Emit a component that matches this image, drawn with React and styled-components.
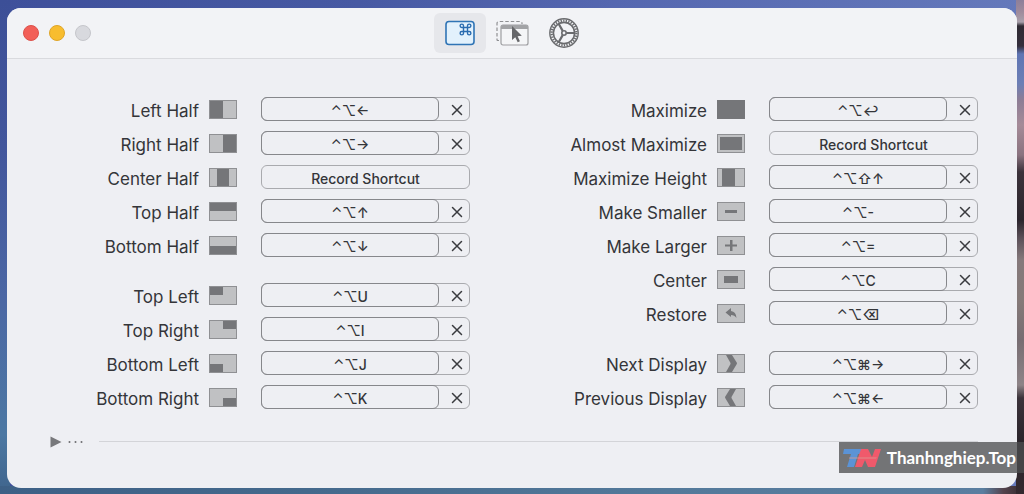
import React from "react";
import styled, { createGlobalStyle } from "styled-components";

const Global = createGlobalStyle`
  * { box-sizing: border-box; }
  body {
    margin: 0;
    font-family: Inter, "Liberation Sans", sans-serif;
    color: #343539;
    background: #4a5ea6;
  }
  button { font: inherit; color: inherit; margin: 0; padding: 0; border: 0; background: none; }
`;

const Desktop = styled.div`
  position: relative;
  min-height: 100vh;
  padding: 8px 7px 6px;
  background:
    linear-gradient(180deg, #8d7f9a 0, #a08b9c 12px, #a9a0ab 22px, #2f2a33 26px, #352f3c 46px, #5f75b4 54px, #6c7fb5 84px, #8d7d95 100px, #a58b98 125px, #8a737f 155px, #3b323a 172px, #2b252c 220px, #5b5058 238px, #85797b 260px, #857a78 300px, #776d72 340px, #8e8487 385px, #3b333a 398px, #2b252b 440px, #33292f 494px) right top / 8px 100% no-repeat,
    linear-gradient(90deg, #3d6086 0, #44698c 30%, #53799a 65%, #5a7ea0 96%, #54434d 98%, #33292f 100%) left bottom / 100% 8px no-repeat,
    linear-gradient(180deg, #3c4f97 0, #42569c 30%, #4b67a4 60%, #4c78a3 88%, #3f648c 100%) left top / 10px 100% no-repeat,
    linear-gradient(90deg, #3f509b 0, #4759a3 35%, #5567b0 60%, #6579bb 100%);
`;

const Window = styled.main`
  min-height: calc(100vh - 14px);
  border-radius: 14px;
  background: #eeeff3;
  overflow: hidden;
`;

const TitleBar = styled.header`
  display: grid;
  grid-template-columns: 1fr auto 1fr;
  align-items: center;
  height: 51px;
  padding: 0 16px;
  background: #f2f3f6;
  border-bottom: 1px solid #d9dade;
`;

const Lights = styled.div`
  display: flex;
  gap: 10px;
`;

const Light = styled.button`
  width: 16px;
  height: 16px;
  border-radius: 50%;
  background: ${(p) => p.$fill};
  border: 1px solid ${(p) => p.$edge};
`;

const Tabs = styled.nav`
  display: flex;
`;

const Tab = styled.button`
  display: grid;
  place-items: center;
  width: 52px;
  height: 40px;
  border-radius: 6px;
  background: ${(p) => (p.$active ? "#e6e7eb" : "none")};
`;

const Content = styled.section`
  display: grid;
  grid-template-columns: 1fr 1fr;
  gap: 88px;
  padding: 38px 39px 0 43px;
`;

const Column = styled.div`
  display: flex;
  flex-direction: column;
  gap: 26px;
`;

const Group = styled.div`
  display: flex;
  flex-direction: column;
  gap: 10px;
`;

const Row = styled.div`
  display: grid;
  grid-template-columns: 1fr 28px 233px;
  align-items: center;
  height: 24px;
`;

const Name = styled.span`
  padding: 4px 10px 0 0;
  font-size: 17px;
  line-height: 20px;
  text-align: right;
  white-space: nowrap;
`;

const Recorder = styled.div`
  display: flex;
  height: 24px;
  margin-left: 24px;
  border: 1px solid #a9aaae;
  border-radius: 6px;
`;

const Shortcut = styled.button`
  flex: 1;
  margin: -1px 0 -1px -1px;
  padding-top: 4px;
  border: 1px solid #86878b;
  border-radius: 6px;
  font-size: 14px;
  font-weight: 500;
  line-height: 18px;
`;

const Record = styled.button`
  flex: 1;
  padding-top: 4px;
  font-size: 14px;
  font-weight: 500;
  line-height: 18px;
`;

const Clear = styled.button`
  display: grid;
  place-items: center;
  width: 30px;
  padding: 2px 0 0 6px;
`;

const More = styled.footer`
  display: grid;
  grid-template-columns: auto 1fr;
  align-items: center;
  gap: 16px;
  padding: 22px 39px 0 43px;
`;

const Disclosure = styled.button`
  display: flex;
  align-items: center;
  gap: 6px;
  height: 20px;
  padding-top: 2px;
`;

const Rule = styled.hr`
  width: 100%;
  margin: 0;
  border: 0;
  border-top: 1px solid #d3d4d8;
`;

const Watermark = styled.aside`
  position: absolute;
  right: 0;
  bottom: 21px;
  display: flex;
  align-items: center;
  gap: 6px;
  height: 31px;
  padding: 0 8px 0 4px;
  background: rgba(76, 77, 79, 0.76);
  color: #fff;
  font: 700 17px/30px Lato, sans-serif;
`;

const DARK = "#757679";
const SHAPES = {
  left: <rect width="14" height="19" />,
  right: <rect x="14" width="14" height="19" />,
  centerHalf: <rect x="8" width="12" height="19" />,
  top: <rect width="28" height="9" />,
  bottom: <rect y="10" width="28" height="9" />,
  topLeft: <rect width="14" height="9" />,
  topRight: <rect x="14" width="14" height="9" />,
  bottomLeft: <rect y="10" width="14" height="9" />,
  bottomRight: <rect x="14" y="10" width="14" height="9" />,
  full: <rect width="28" height="19" />,
  almost: <rect x="3" y="3" width="22" height="13" />,
  height: <rect x="5" width="13" height="19" />,
  minus: <rect x="8" y="8" width="12" height="3" />,
  plus: <path d="M13 4h2.500v4.500H20v2h-4.500V15H13v-4.500H8v-2h5z" />,
  center: <rect x="7" y="6" width="14" height="7" />,
  restore: <path d="M8.500 8.500 14 4v3q5 .5 5.500 7-2-3-5.500-3v2z" />,
  next: <path d="M9 1h6l5 8-.2 1L15 18H9l4.500-8v-1z" />,
  previous: <path d="M19 1h-6L8 9l.2 1L13 18h6l-4.500-8v-1z" />,
};

function Thumb({ kind }) {
  return (
    <svg width="28" height="19" viewBox="0 0 28 19" aria-hidden="true">
      <rect width="28" height="19" fill="#c0c1c3" />
      <g fill={DARK}>{SHAPES[kind]}</g>
      <rect x=".5" y=".5" width="27" height="18" fill="none" stroke={kind === "full" ? DARK : "#8f9093"} />
    </svg>
  );
}

const LEFT = [
  [
    ["Left Half", "left", "⌃⌥←"],
    ["Right Half", "right", "⌃⌥→"],
    ["Center Half", "centerHalf", null],
    ["Top Half", "top", "⌃⌥↑"],
    ["Bottom Half", "bottom", "⌃⌥↓"],
  ],
  [
    ["Top Left", "topLeft", "⌃⌥U"],
    ["Top Right", "topRight", "⌃⌥I"],
    ["Bottom Left", "bottomLeft", "⌃⌥J"],
    ["Bottom Right", "bottomRight", "⌃⌥K"],
  ],
];

const RIGHT = [
  [
    ["Maximize", "full", "⌃⌥↩"],
    ["Almost Maximize", "almost", null],
    ["Maximize Height", "height", "⌃⌥⇧↑"],
    ["Make Smaller", "minus", "⌃⌥-"],
    ["Make Larger", "plus", "⌃⌥="],
    ["Center", "center", "⌃⌥C"],
    ["Restore", "restore", "⌃⌥⌫"],
  ],
  [
    ["Next Display", "next", "⌃⌥⌘→"],
    ["Previous Display", "previous", "⌃⌥⌘←"],
  ],
];

function ShortcutRow({ name, kind, keys }) {
  const id = `action-${kind}`;
  return (
    <Row>
      <Name id={id}>{name}</Name>
      <Thumb kind={kind} />
      <Recorder role="group" aria-labelledby={id}>
        {keys ? (
          <>
            <Shortcut>{keys}</Shortcut>
            <Clear aria-label={`Clear ${name}`}>
              <svg width="12" height="12" viewBox="0 0 12 12" fill="none" stroke="#3a3b3f" strokeWidth="1.500" strokeLinecap="round">
                <path d="m1.500 1.500 9 9m0-9-9 9" />
              </svg>
            </Clear>
          </>
        ) : (
          <Record>Record Shortcut</Record>
        )}
      </Recorder>
    </Row>
  );
}

function ShortcutColumn({ groups }) {
  return (
    <Column>
      {groups.map((rows, i) => (
        <Group key={i}>
          {rows.map(([name, kind, keys]) => (
            <ShortcutRow key={kind} name={name} kind={kind} keys={keys} />
          ))}
        </Group>
      ))}
    </Column>
  );
}

function ShortcutsIcon() {
  return (
    <svg width="30" height="26" viewBox="0 0 30 26" fill="none">
      <rect x="1" y="1.500" width="28" height="23" rx="3" fill="#e2f1fc" stroke="#2f74b5" strokeWidth="1.600" />
      <path
        d="M18.500 7.500h4v4h-4zM18.500 7.500h-1.700a1.700 1.700 0 1 1 1.700-1.700zM22.500 7.500V5.800a1.700 1.700 0 1 1 1.700 1.700zM22.500 11.500h1.700a1.700 1.700 0 1 1-1.700 1.700zM18.500 11.500v1.700a1.700 1.700 0 1 1-1.700-1.700z"
        stroke="#2a6cb0"
        strokeWidth="1.400"
      />
    </svg>
  );
}

function SnapIcon() {
  return (
    <svg width="34" height="28" viewBox="0 0 34 28" fill="none">
      <path d="M4 21.500H3q-1 0-1-1v-16q0-2 2-2h21q2 0 2 2V5" stroke="#8f9093" strokeWidth="1.200" strokeDasharray="3.500 2" />
      <rect x="6" y="6" width="27" height="20" rx="2" fill="#f4f5f7" stroke="#9d9ea1" strokeWidth="1.200" />
      <path d="M6 10V8q0-2 2-2h23q2 0 2 2v2z" fill="#a2a3a6" />
      <path d="M17 7v14l3.300-2.700 2.400 5 2.200-1-2.300-5 4.200-.5z" fill="#66676a" />
    </svg>
  );
}

function GearIcon() {
  return (
    <svg width="32" height="32" viewBox="0 0 32 32" fill="none" stroke="#6a6b6e">
      <circle cx="16" cy="16" r="14.200" strokeWidth="1.400" />
      <circle cx="16" cy="16" r="12.400" strokeWidth="2.400" strokeDasharray="1.300 1.300" />
      <circle cx="16" cy="16" r="10.600" strokeWidth="1.600" />
      <circle cx="16" cy="16" r="2.200" strokeWidth="1.600" />
      <path d="M18.500 16H27M14.700 13.900 10.500 6.500M14.700 18.100l-4.200 7.400" strokeWidth="2.200" />
    </svg>
  );
}

export default function App() {
  return (
    <Desktop>
      <Global />
      <Window>
        <TitleBar>
          <Lights>
            <Light $fill="#f25f58" $edge="#dc514b" aria-label="Close" />
            <Light $fill="#f8bd2f" $edge="#dfa528" aria-label="Minimize" />
            <Light $fill="#d8d9de" $edge="#c5c6cb" aria-label="Zoom" />
          </Lights>
          <Tabs>
            <Tab $active aria-label="Shortcuts"><ShortcutsIcon /></Tab>
            <Tab aria-label="Snap areas"><SnapIcon /></Tab>
            <Tab aria-label="Settings"><GearIcon /></Tab>
          </Tabs>
        </TitleBar>
        <Content>
          <ShortcutColumn groups={LEFT} />
          <ShortcutColumn groups={RIGHT} />
        </Content>
        <More>
          <Disclosure aria-label="Show more">
            <svg width="12" height="12" viewBox="0 0 12 12"><path d="M.5.5 11.500 6 .5 11.500z" fill="#77787b" /></svg>
            <svg width="15" height="4" viewBox="0 0 15 4" fill="#6d6e71">
              <circle cx="1.500" cy="2" r="1" /><circle cx="7.500" cy="2" r="1" /><circle cx="13.500" cy="2" r="1" />
            </svg>
          </Disclosure>
          <Rule />
        </More>
      </Window>
      <Watermark>
        <svg width="38" height="18" viewBox="0 0 38 18">
          <path d="M1 0h22l-2 5h-6l-4 13H4L8 5H0z" fill="#5b93d6" />
          <path d="M18 0h7l4 8 3-8h6l-6 18h-7l-3-7-3 7h-7z" fill="#f0596b" />
          <path d="M6 8h28l-1 2H6z" fill="#d99a94" opacity=".4" />
        </svg>
        Thanhnghiep.Top
      </Watermark>
    </Desktop>
  );
}
